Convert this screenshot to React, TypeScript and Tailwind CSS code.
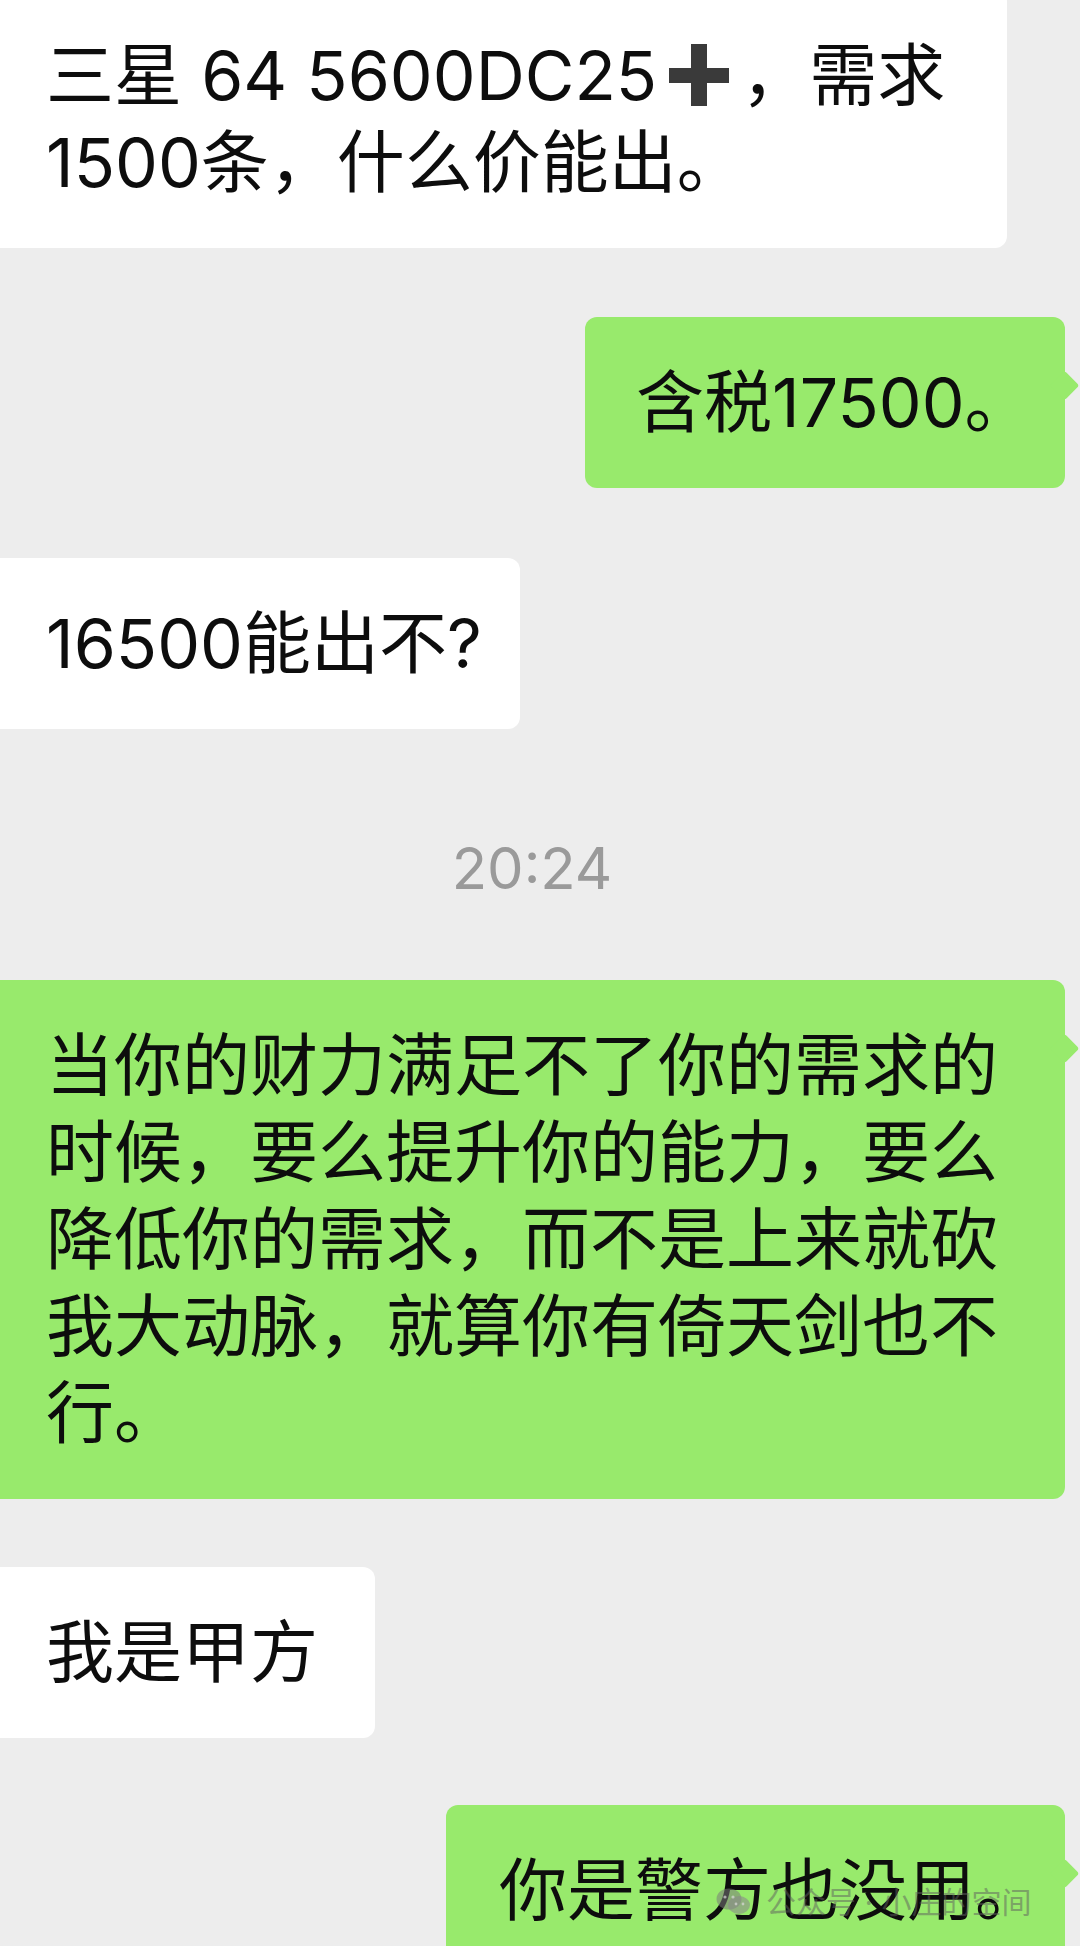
import React from 'react';

// WeChat chat screenshot, scaled up (message text ~68px)
const GREEN = 'bg-[#98ea6c]';

// iOS "heavy plus" emoji, drawn
const HeavyPlus: React.FC = () => (
  <span className="inline-flex w-[84px] justify-center align-[-6px]">
    <svg width="60" height="62" viewBox="0 0 60 62">
      <rect x="22" y="0" width="16" height="62" fill="#3a3a3a" />
      <rect x="0" y="24" width="60" height="15" fill="#3a3a3a" />
    </svg>
  </span>
);

// small arrow on the right side of outgoing bubbles
const Tail: React.FC = () => (
  <span className="absolute -right-[10px] top-[58px] h-[21px] w-[21px] rotate-45 rounded-[3px] bg-[#98ea6c]" />
);

const WeChatMark: React.FC = () => (
  <svg width="36" height="28" viewBox="0 0 36 28">
    <ellipse cx="13" cy="11" rx="12.5" ry="10.5" fill="#7a7a7a" fillOpacity="0.55" />
    <ellipse cx="23" cy="17" rx="11" ry="9" fill="#8a8a8a" fillOpacity="0.6" />
    <circle cx="9" cy="9" r="1.6" fill="#d8d8d8" fillOpacity="0.7" />
    <circle cx="17" cy="9" r="1.6" fill="#d8d8d8" fillOpacity="0.7" />
    <circle cx="20" cy="16" r="1.4" fill="#d8d8d8" fillOpacity="0.7" />
    <circle cx="27" cy="16" r="1.4" fill="#d8d8d8" fillOpacity="0.7" />
  </svg>
);

export default function App() {
  return (
    <div className="relative flex h-[1946px] w-[1080px] flex-col overflow-hidden bg-[#ededed] font-['Inter','Noto_Sans_CJK_SC',sans-serif] text-[68px] leading-[87px] text-[#0d0d0d]">
      {/* incoming: top message, cut off by the top edge */}
      <div className="-mt-[10px] w-[1007px] rounded-r-[12px] bg-white py-[42px] pl-[46px]">
        三星 64 5600DC25
        <HeavyPlus />
        ，需求
        <br />
        1500条，什么价能出。
      </div>

      {/* outgoing */}
      <div className={`relative mr-[15px] mt-[69px] w-[480px] self-end rounded-[12px] ${GREEN} py-[42px] pl-[51px]`}>
        含税17500。
        <Tail />
      </div>

      {/* incoming */}
      <div className="mt-[70px] w-[520px] rounded-r-[12px] bg-white py-[42px] pl-[46px]">16500能出不?</div>

      {/* time stamp */}
      <div className="mt-[109px] h-[60px] pr-[16px] text-center text-[58px] leading-[60px] text-[#9a9a9a]">20:24</div>

      {/* outgoing, long */}
      <div className={`relative mr-[15px] mt-[82px] w-[1065px] self-end rounded-r-[12px] ${GREEN} py-[42px] pl-[46px]`}>
        当你的财力满足不了你的需求的
        <br />
        时候，要么提升你的能力，要么
        <br />
        降低你的需求，而不是上来就砍
        <br />
        我大动脉，就算你有倚天剑也不
        <br />
        行。
        <Tail />
      </div>

      {/* incoming */}
      <div className="mt-[68px] w-[375px] rounded-r-[12px] bg-white py-[42px] pl-[46px]">我是甲方</div>

      {/* outgoing, cut off by the bottom edge */}
      <div className={`relative mr-[15px] mt-[67px] w-[619px] shrink-0 self-end rounded-[12px] ${GREEN} py-[42px] pl-[53px]`}>
        你是警方也没用。
        <Tail />
      </div>

      {/* article watermark over the picture */}
      <div className="absolute left-[716px] top-[1886px] flex items-center gap-[14px] text-[30px] leading-[32px] text-[#5f5f5f]/50">
        <WeChatMark />
        <span>公众号 · 小庄的空间</span>
      </div>
    </div>
  );
}
